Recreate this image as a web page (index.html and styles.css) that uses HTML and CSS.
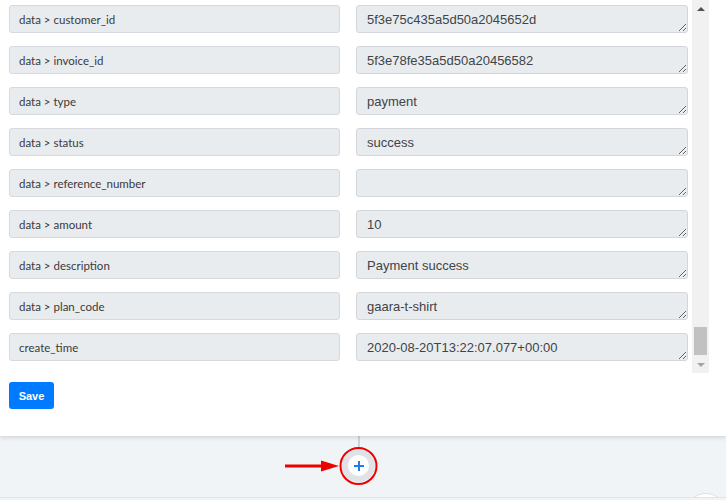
FILE: index.html
```html
<!DOCTYPE html>
<html>
<head>
<meta charset="utf-8">
<link rel="stylesheet" href="styles.css">
</head>
<body>
<div class="panel">
  <div class="scroller">
    <div class="fields">
      <div class="label">data &gt; customer_id</div>
      <textarea class="value" readonly>5f3e75c435a5d50a2045652d</textarea>
      <div class="label">data &gt; invoice_id</div>
      <textarea class="value" readonly>5f3e78fe35a5d50a20456582</textarea>
      <div class="label">data &gt; type</div>
      <textarea class="value" readonly>payment</textarea>
      <div class="label">data &gt; status</div>
      <textarea class="value" readonly>success</textarea>
      <div class="label">data &gt; reference_number</div>
      <textarea class="value" readonly></textarea>
      <div class="label">data &gt; amount</div>
      <textarea class="value" readonly>10</textarea>
      <div class="label">data &gt; description</div>
      <textarea class="value" readonly>Payment success</textarea>
      <div class="label">data &gt; plan_code</div>
      <textarea class="value" readonly>gaara-t-shirt</textarea>
      <div class="label">create_time</div>
      <textarea class="value" readonly>2020-08-20T13:22:07.077+00:00</textarea>
    </div>
    <div class="scrollbar">
      <div class="arrow up"></div>
      <div class="track"><div class="thumb"></div></div>
      <div class="arrow down"></div>
    </div>
  </div>
  <div class="actions">
    <button class="save">Save</button>
  </div>
</div>
<div class="canvas">
  <div class="flow">
    <div class="connector"></div>
    <div class="node"><div class="node-inner"><svg width="12" height="12" viewBox="0 0 12 12"><path d="M6 1v10M1 6h10" stroke="#1f7cf2" stroke-width="2" fill="none"/></svg></div></div>
  </div>
  <svg class="annot" width="100" height="44" viewBox="0 0 100 44">
    <path d="M0 22H38" stroke="#ee0000" stroke-width="3"/>
    <path d="M36 16.5L54 22L36 27.5Z" fill="#ee0000"/>
    <circle cx="73.5" cy="22" r="18" stroke="#ee0000" stroke-width="2" fill="none"/>
  </svg>
  <div class="corner-node"></div>
</div>
</body>
</html>
```
FILE: styles.css
```css
html, body {
  margin: 0;
  padding: 0;
}
body {
  width: 726px;
  height: 500px;
  overflow: hidden;
  background: #f1f4f7;
  font-family: "Liberation Sans", Arial, sans-serif;
}
.panel {
  background: #fff;
  height: 436px;
  box-shadow: 0 2px 4px rgba(0, 0, 0, 0.12);
  position: relative;
  z-index: 1;
}
.scroller {
  display: flex;
  height: 373px;
}
.fields {
  width: 679px;
  padding: 5px 4px 12px 9px;
  display: grid;
  grid-template-columns: 331px 332px;
  column-gap: 16px;
  row-gap: 13px;
  align-content: start;
}
.label {
  box-sizing: border-box;
  height: 28px;
  background: #e9ecef;
  border: 1px solid #d6d9dd;
  border-radius: 3px;
  padding: 0 9px;
  display: flex;
  align-items: center;
  font-family: "Lato", "Open Sans", sans-serif;
  font-size: 11.5px;
  color: #3a3a3a;
}
.value {
  box-sizing: border-box;
  height: 28px;
  margin: 0;
  background: #e9ecef;
  border: 1px solid #d3d7db;
  border-radius: 3px;
  padding: 6px 10px 0;
  font-family: "Liberation Sans", Arial, sans-serif;
  font-size: 13px;
  line-height: 15px;
  color: #404448;
  overflow: hidden;
  outline: none;
  display: block;
}
.scrollbar {
  width: 17px;
  background: #f1f1f1;
  display: flex;
  flex-direction: column;
}
.arrow {
  height: 17px;
  display: flex;
  align-items: center;
  justify-content: center;
}
.arrow.up::before {
  content: "";
  border-left: 4px solid transparent;
  border-right: 4px solid transparent;
  border-bottom: 4px solid #505050;
}
.arrow.down::before {
  content: "";
  border-left: 4px solid transparent;
  border-right: 4px solid transparent;
  border-top: 4px solid #a3a3a3;
}
.track {
  flex: 1;
  display: flex;
  flex-direction: column;
  justify-content: flex-end;
  padding: 0 2px;
}
.thumb {
  height: 28px;
  background: #c1c1c1;
  margin-bottom: 1px;
}
.actions {
  padding: 9px 9px 0;
}
.save {
  width: 45px;
  height: 27px;
  border: none;
  border-radius: 3px;
  background: #007bff;
  color: #fff;
  font-family: "Liberation Sans", Arial, sans-serif;
  font-weight: bold;
  font-size: 11px;
  padding: 0;
}
.canvas {
  height: 61px;
  border-bottom: 1px solid #e2e5e9;
  position: relative;
  overflow: hidden;
}
.flow {
  padding-left: 342px;
  display: flex;
  flex-direction: column;
  width: 33px;
  align-items: center;
}
.connector {
  width: 2px;
  height: 14px;
  background: #cfd2d6;
}
.node {
  width: 33px;
  height: 33px;
  border-radius: 50%;
  background: #dfe2e6;
  display: flex;
  align-items: center;
  justify-content: center;
  margin-top: -1px;
}
.node-inner {
  width: 21px;
  height: 21px;
  border-radius: 50%;
  background: #fff;
  display: flex;
  align-items: center;
  justify-content: center;
}
.annot {
  position: absolute;
  left: 285px;
  top: 8px;
}
.corner-node {
  position: absolute;
  left: 685px;
  top: 57px;
  width: 40px;
  height: 40px;
  border-radius: 50%;
  background: #fff;
  border: 1px solid #e0e0e0;
}
```
